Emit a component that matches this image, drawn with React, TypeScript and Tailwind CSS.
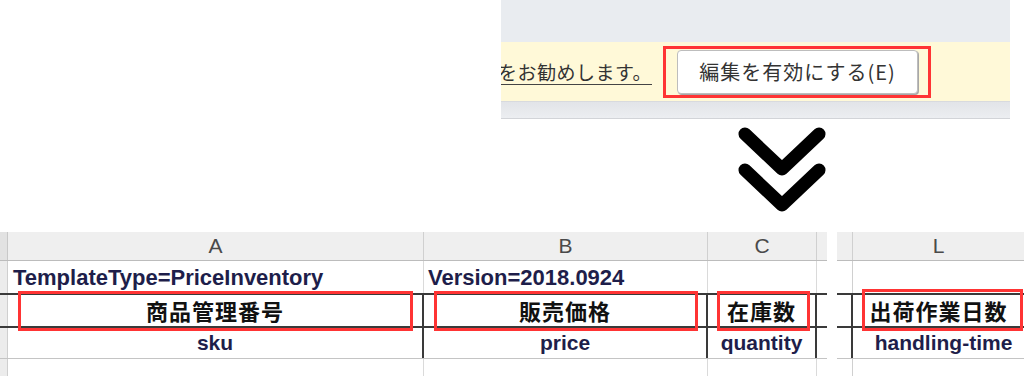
const latin = "font-['Liberation_Sans','Noto_Sans_CJK_JP',sans-serif]";
const cjk = "font-['Noto_Sans_CJK_JP','Liberation_Sans',sans-serif]";

function RedBox({ className }: { className: string }) {
  return <div className={`absolute border-[3px] border-[#ff3434] pointer-events-none ${className}`} />;
}

export default function App() {
  return (
    <div className={`w-[1024px] h-[376px] bg-white overflow-hidden flex flex-col ${latin}`}>
      {/* Excel protected view banner */}
      <div className="h-[119px] flex pl-[501px] pr-[14px]">
        <div className="flex-1 flex flex-col">
          <div className="h-[42px] bg-[#e9ecf0]" />
          <div className="h-[59px] bg-[#fff9d8] flex items-center">
            <div className="w-[151px] flex justify-end overflow-hidden whitespace-nowrap">
              <span className={`${cjk} text-[19px] tracking-[0.5px] leading-[28px] text-[#333] underline underline-offset-[4px] decoration-[#444]`}>
                をお勧めします。
              </span>
            </div>
            <div className="ml-[11px] w-[268px] h-[52px] border-[3px] border-[#ff3434] flex items-center pl-[11px] pr-[10px]">
              <div className="flex-1 h-[44px] bg-white border border-[#bdbdbd] rounded-[4px] shadow-[1px_1px_0_#a8a8a8] flex items-center justify-center">
                <span className={`${cjk} text-[20px] tracking-[1px] text-[#333] leading-none`}>編集を有効にする(E)</span>
              </div>
            </div>
          </div>
          <div className="h-[18px] bg-gradient-to-b from-[#e2e4e8] to-[#eceef1] border-t border-[#d8dade] border-b border-b-[#d2d4d8]" />
        </div>
      </div>

      {/* arrow */}
      <div className="h-[109px] pl-[737px] pt-[6px]">
        <svg width="90" height="90" viewBox="0 0 90 90" fill="none" stroke="#000" strokeWidth="13" strokeLinecap="round" strokeLinejoin="round">
          <path d="M8 9 L45 44 L82 9" />
          <path d="M8 45 L45 80 L82 45" />
        </svg>
      </div>

      {/* spreadsheet */}
      <div className="flex-1 flex pt-[4px]">
        {/* section A-C */}
        <div className="w-[827px] flex flex-col">
          <div className="h-[29px] flex bg-[#efefef] border-b border-[#bcbcbc] text-[21px] text-[#4a4a4a]">
            <div className="w-[8px] border-r border-[#c8c8c8] bg-[#e2e2e2]" />
            <div className="w-[416px] border-r border-[#d0d0d0] flex items-center justify-center">A</div>
            <div className="w-[284px] border-r border-[#d0d0d0] flex items-center justify-center">B</div>
            <div className="w-[109px] border-r border-[#d0d0d0] flex items-center justify-center">C</div>
            <div className="flex-1" />
          </div>
          <div className="h-[34px] flex border-b-2 border-[#3a3a3a] text-[22px] font-bold text-[#1e1e4a]">
            <div className="w-[8px] border-r border-[#cfcfcf] bg-[#ececec]" />
            <div className="w-[416px] border-r border-[#dadada] flex items-center pl-[5px] whitespace-nowrap">TemplateType=PriceInventory</div>
            <div className="w-[284px] border-r border-[#dadada] flex items-center pl-[4px] whitespace-nowrap">Version=2018.0924</div>
            <div className="w-[109px] border-r border-[#dadada]" />
            <div className="flex-1" />
          </div>
          <div className={`h-[33px] flex border-b-2 border-[#3a3a3a] text-[22px] font-bold text-[#111] tracking-[1px] ${cjk}`}>
            <div className="w-[8px] border-r border-[#cfcfcf] bg-[#ececec]" />
            <div className="relative w-[416px] border-r-2 border-[#3a3a3a] flex items-center justify-center">
              商品管理番号
              <RedBox className="left-[10px] right-[9px] -top-[4px] -bottom-[5px]" />
            </div>
            <div className="relative w-[284px] border-r-2 border-[#3a3a3a] flex items-center justify-center">
              販売価格
              <RedBox className="left-[10px] right-[8px] -top-[4px] -bottom-[5px]" />
            </div>
            <div className="relative w-[109px] border-r-2 border-[#3a3a3a] flex items-center justify-center">
              在庫数
              <RedBox className="left-[9px] right-[5px] -top-[4px] -bottom-[5px]" />
            </div>
            <div className="flex-1" />
          </div>
          <div className="h-[31px] flex border-b border-[#c4c4c4] text-[21px] font-bold text-[#1e1e4a]">
            <div className="w-[8px] border-r border-[#cfcfcf] bg-[#ececec]" />
            <div className="w-[416px] border-r-2 border-[#3a3a3a] flex items-center justify-center">sku</div>
            <div className="w-[284px] border-r-2 border-[#3a3a3a] flex items-center justify-center">price</div>
            <div className="w-[109px] border-r-2 border-[#3a3a3a] flex items-center justify-center">quantity</div>
            <div className="flex-1" />
          </div>
          <div className="flex-1 flex">
            <div className="w-[8px] border-r border-[#cfcfcf] bg-[#ececec]" />
            <div className="w-[416px] border-r border-[#dadada]" />
            <div className="w-[284px] border-r border-[#dadada]" />
            <div className="w-[109px] border-r border-[#dadada]" />
          </div>
        </div>

        {/* section L */}
        <div className="ml-[10px] flex-1 flex flex-col">
          <div className="h-[29px] flex bg-[#efefef] border-b border-[#bcbcbc] text-[21px] text-[#4a4a4a]">
            <div className="w-[16px] border-r border-[#d0d0d0]" />
            <div className="flex-1 flex items-center justify-center">L</div>
          </div>
          <div className="h-[34px] flex border-b-2 border-[#3a3a3a]">
            <div className="w-[16px] border-r border-[#d0d0d0]" />
            <div className="flex-1" />
          </div>
          <div className={`h-[33px] flex border-b-2 border-[#3a3a3a] text-[22px] font-bold text-[#111] tracking-[1px] ${cjk}`}>
            <div className="w-[16px] border-r-2 border-[#3a3a3a]" />
            <div className="relative flex-1 flex items-center justify-center">
              出荷作業日数
              <RedBox className="left-[9px] right-[1px] -top-[6px] -bottom-[5px]" />
            </div>
          </div>
          <div className="h-[31px] flex border-b border-[#c4c4c4] text-[21px] font-bold text-[#1e1e4a]">
            <div className="w-[16px] border-r-2 border-[#3a3a3a]" />
            <div className="flex-1 flex items-center justify-center pl-[10px]">handling-time</div>
          </div>
          <div className="flex-1 flex">
            <div className="w-[16px] border-r border-[#d0d0d0]" />
          </div>
        </div>
      </div>
    </div>
  );
}
